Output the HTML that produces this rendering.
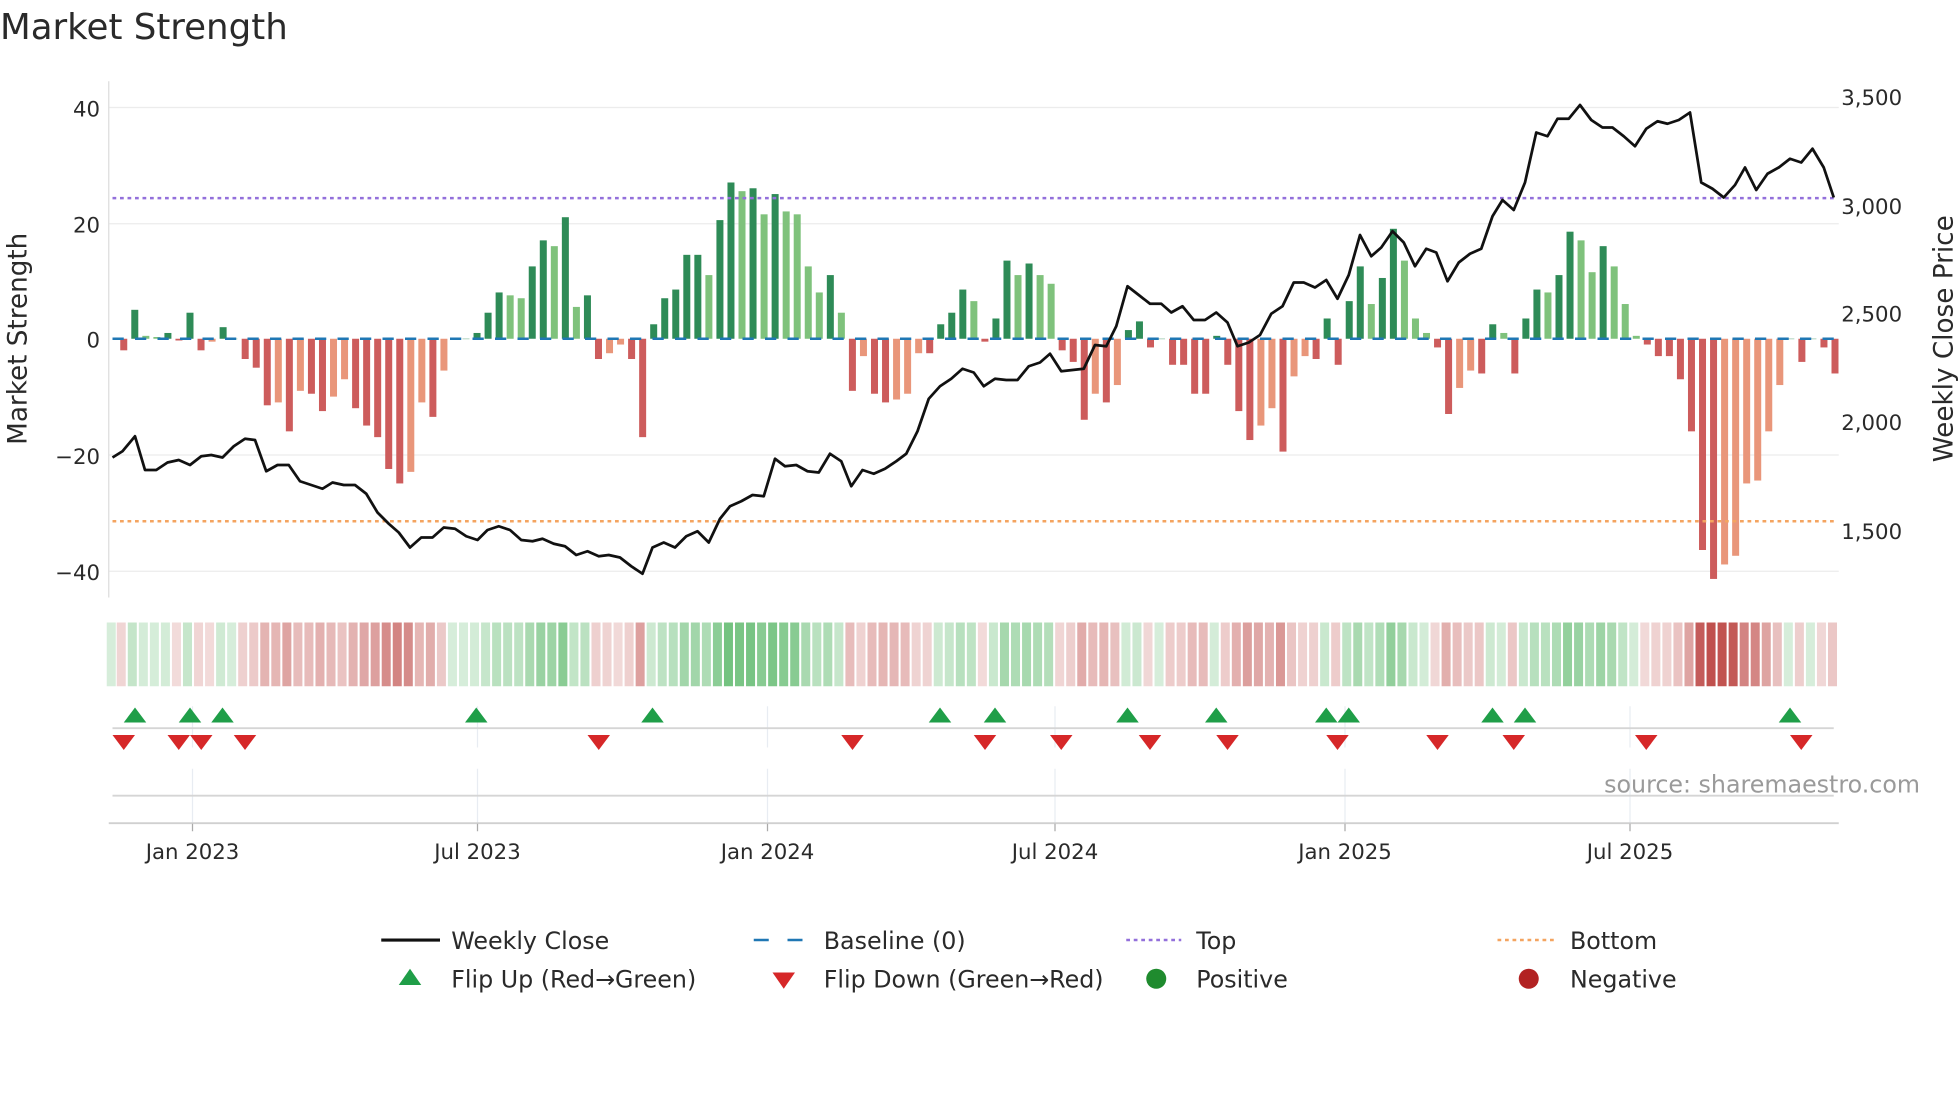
<!DOCTYPE html>
<html><head><meta charset="utf-8"><style>
html,body{margin:0;padding:0;background:#fff;width:1960px;height:1102px;overflow:hidden}
svg{display:block}
text{font-family:"DejaVu Sans","Liberation Sans",sans-serif;fill:#2a2a2a}
</style></head><body>
<svg id="s" width="1960" height="1102" viewBox="0 0 1568 881.6" xmlns="http://www.w3.org/2000/svg">
<text x="0" y="31" font-size="28.5" fill="#333">Market Strength</text>
<g stroke="#ececec" stroke-width="1">
<line x1="87" y1="86" x2="1471" y2="86"/><line x1="87" y1="179" x2="1471" y2="179"/>
<line x1="87" y1="364" x2="1471" y2="364"/><line x1="87" y1="457" x2="1471" y2="457"/>
</g>
<line x1="87" y1="65" x2="87" y2="478" stroke="#ddd"/>
<g font-size="17" text-anchor="end">
<text x="80" y="93">40</text><text x="80" y="186">20</text><text x="80" y="278">0</text>
<text x="80" y="371">−20</text><text x="80" y="464">−40</text>
</g>
<g font-size="17">
<text x="1473" y="84">3,500</text><text x="1473" y="171">3,000</text><text x="1473" y="257">2,500</text>
<text x="1473" y="344">2,000</text><text x="1473" y="431">1,500</text>
</g>
<text transform="translate(21,271) rotate(-90)" font-size="21" text-anchor="middle">Market Strength</text>
<text transform="translate(1562,271) rotate(-90)" font-size="21" text-anchor="middle">Weekly Close Price</text>
<g id="bars"></g>
<line x1="90" y1="271" x2="1470" y2="271" stroke="#1f77b4" stroke-width="2" stroke-dasharray="9,9"/>
<line x1="90" y1="158.5" x2="1470" y2="158.5" stroke="#9370db" stroke-width="2" stroke-dasharray="3,3"/>
<line x1="90" y1="417" x2="1470" y2="417" stroke="#f4a460" stroke-width="2" stroke-dasharray="3,3"/>
<polyline id="price" fill="none" stroke="#111" stroke-width="2.2" stroke-linejoin="round"/>
<g id="heat"></g>
<g stroke="#e8ecf2" stroke-width="1">
<line x1="154" y1="565" x2="154" y2="598"/><line x1="382" y1="565" x2="382" y2="598"/><line x1="614" y1="565" x2="614" y2="598"/><line x1="844" y1="565" x2="844" y2="598"/><line x1="1076" y1="565" x2="1076" y2="598"/><line x1="1304" y1="565" x2="1304" y2="598"/>
<line x1="154" y1="615" x2="154" y2="658"/><line x1="382" y1="615" x2="382" y2="658"/><line x1="614" y1="615" x2="614" y2="658"/><line x1="844" y1="615" x2="844" y2="658"/><line x1="1076" y1="615" x2="1076" y2="658"/><line x1="1304" y1="615" x2="1304" y2="658"/>
</g>
<line x1="90" y1="582.5" x2="1467" y2="582.5" stroke="#d5d5d5" stroke-width="1.5"/>
<line x1="90" y1="636.5" x2="1467" y2="636.5" stroke="#d5d5d5" stroke-width="1.5"/>
<line x1="87" y1="658.5" x2="1471" y2="658.5" stroke="#d0d0d0" stroke-width="1.5"/>
<g stroke="#aaa"><line x1="154" y1="659" x2="154" y2="665"/><line x1="382" y1="659" x2="382" y2="665"/><line x1="614" y1="659" x2="614" y2="665"/><line x1="844" y1="659" x2="844" y2="665"/><line x1="1076" y1="659" x2="1076" y2="665"/><line x1="1304" y1="659" x2="1304" y2="665"/></g>
<g id="flips"></g>
<text x="1536" y="634" font-size="19" text-anchor="end" style="fill:#9a9a9a">source: sharemaestro.com</text>
<g font-size="17" text-anchor="middle">
<text x="154" y="687">Jan 2023</text><text x="382" y="687">Jul 2023</text><text x="614" y="687">Jan 2024</text>
<text x="844" y="687">Jul 2024</text><text x="1076" y="687">Jan 2025</text><text x="1304" y="687">Jul 2025</text>
</g>
<g font-size="19">
<line x1="305" y1="752" x2="352" y2="752" stroke="#111" stroke-width="2.5"/><text x="361" y="759">Weekly Close</text>
<line x1="603" y1="752" x2="647" y2="752" stroke="#1f77b4" stroke-width="2" stroke-dasharray="12,15"/><text x="659" y="759">Baseline (0)</text>
<line x1="901" y1="752" x2="945" y2="752" stroke="#9370db" stroke-width="2" stroke-dasharray="3,3"/><text x="957" y="759">Top</text>
<line x1="1198" y1="752" x2="1243" y2="752" stroke="#f4a460" stroke-width="2" stroke-dasharray="3,3"/><text x="1256" y="759">Bottom</text>
<path d="M328 775 L337 788 L319 788 Z" fill="#1f9e48"/><text x="361" y="790">Flip Up (Red→Green)</text>
<path d="M618 778 L636 778 L627 791 Z" fill="#d62728"/><text x="659" y="790">Flip Down (Green→Red)</text>
<circle cx="925" cy="783" r="8" fill="#1f8b2e"/><text x="957" y="790">Positive</text>
<circle cx="1223" cy="783" r="8" fill="#b22222"/><text x="1256" y="790">Negative</text>
</g>
</svg>
<script>
var NS="http://www.w3.org/2000/svg";
var v=[-2,5,0.5,0.3,1,-0.3,4.5,-2,-0.5,2,0,-3.5,-5,-11.5,-11,-16,-9,-9.5,-12.5,-10,-7,-12,-15,-17,-22.5,-25,-23,-11,-13.5,-5.5,0,0,1,4.5,8,7.5,7,12.5,17,16,21,5.5,7.5,-3.5,-2.5,-1,-3.5,-17,2.5,7,8.5,14.5,14.5,11,20.5,27,25.5,26,21.5,25,22,21.5,12.5,8,11,4.5,-9,-3,-9.5,-11,-10.5,-9.5,-2.5,-2.5,2.5,4.5,8.5,6.5,-0.5,3.5,13.5,11,13,11,9.5,-2,-4,-14,-9.5,-11,-8,1.5,3,-1.5,0,-4.5,-4.5,-9.5,-9.5,0.5,-4.5,-12.5,-17.5,-15,-12,-19.5,-6.5,-3,-3.5,3.5,-4.5,6.5,12.5,6,10.5,19,13.5,3.5,1,-1.5,-13,-8.5,-5.5,-6,2.5,1,-6,3.5,8.5,8,11,18.5,17,11.5,16,12.5,6,0.5,-1,-3,-3,-7,-16,-36.5,-41.5,-39,-37.5,-25,-24.5,-16,-8,0,-4,0,-1.5,-6];
var bars=document.getElementById('bars'),heat=document.getElementById('heat');
var x0=99,dx=(1468-99)/(v.length-1);
function rect(g,x,y,w,h,f,o){var r=document.createElementNS(NS,'rect');r.setAttribute('x',x);r.setAttribute('y',y);r.setAttribute('width',w);r.setAttribute('height',Math.max(h,0.3));r.setAttribute('fill',f);if(o!=null)r.setAttribute('fill-opacity',o);g.appendChild(r);}
for(var i=0;i<v.length;i++){var x=x0+i*dx,a=v[i],p=i?v[i-1]:0,c;
 if(a>=0)c=(a>=p)?'#2e8b57':'#7fc27c';else c=(a<=p)?'#cd5c5c':'#e9967a';
 var h=Math.abs(a)*4.63;rect(bars,x-2.8,a>=0?271-h:271,5.6,h,c);
 var hc=a>=0?'#5cb86a':'#c0504d',o=a>=0?0.25+0.6*Math.min(1,a/27):0.2+0.8*Math.min(1,-a/40);
 rect(heat,x-3.6-2,498,7.2,51,hc,o);}
rect(heat,x0-13.6,498,7.2,51,'#5cb86a',0.25);
var P="90,366 98,361 108,349 116,376 125,376 134,370 143,368 152,372 161,365 169,364 178,366 187,357 196,351 204,352 213,377 222,372 231,372 240,385 249,388 258,391 266,386 275,388 284,388 293,395 302,410 311,419 319,426 328,438 337,430 346,430 355,422 364,423 373,429 382,432 390,424 399,421 408,424 417,432 426,433 434,431 443,435 452,437 461,444 470,441 479,445 487,444 496,446 505,453 514,459 522,438 531,434 540,438 549,429 558,425 567,434 576,415 584,405 593,401 602,396 611,397 620,367 628,373 637,372 646,377 655,378 664,363 673,369 681,389 690,376 699,379 708,375 717,369 725,363 734,345 743,319 752,309 761,303 770,295 779,298 787,309 796,303 805,304 814,304 823,293 832,290 840,283 849,297 858,296 867,295 876,276 885,277 893,261 902,229 911,236 920,243 929,243 937,250 946,245 955,256 964,256 973,250 982,258 990,277 999,274 1008,268 1017,251 1026,245 1035,226 1043,226 1052,230 1061,224 1070,239 1079,220 1088,188 1097,205 1105,198 1114,185 1123,194 1132,213 1141,199 1149,202 1158,225 1167,210 1176,203 1185,199 1194,173 1202,160 1211,168 1220,146 1229,106 1238,109 1246,95 1255,95 1264,84 1273,96 1282,102 1290,102 1299,109 1308,117 1317,103 1326,97 1334,99 1343,96 1352,90 1361,146 1370,151 1379,158 1388,148 1396,134 1405,152 1414,139 1423,134 1432,127 1441,130 1450,119 1459,134 1467,158";
document.getElementById('price').setAttribute('points',P);
var fl=document.getElementById('flips');
[108,152,178,381,522,752,796,902,973,1061,1079,1194,1220,1432].forEach(function(x){var p=document.createElementNS(NS,'path');p.setAttribute('d','M'+x+' 566 L'+(x+9)+' 578 L'+(x-9)+' 578 Z');p.setAttribute('fill','#1f9e48');fl.appendChild(p);});
[99,143,161,196,479,682,788,849,920,982,1070,1150,1211,1317,1441].forEach(function(x){var p=document.createElementNS(NS,'path');p.setAttribute('d','M'+(x-9)+' 588 L'+(x+9)+' 588 L'+x+' 600 Z');p.setAttribute('fill','#d62728');fl.appendChild(p);});
</script>
</body></html>
